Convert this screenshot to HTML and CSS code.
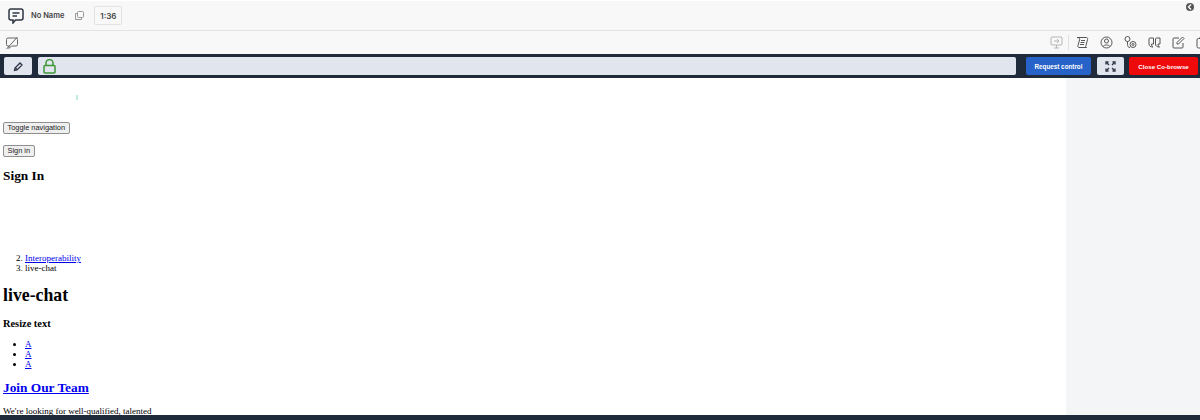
FILE: index.html
```html
<!DOCTYPE html>
<html lang="en">
<head>
    <meta charset="UTF-8">
    <meta name="viewport" content="width=device-width, initial-scale=1.0">
    <title>Live chat</title>
    <link rel="stylesheet" href="styles.css">
</head>
<body>

<div class="app">
    <!-- Chat header -->
    <div class="chat-header">
        <svg class="chat-icon" width="16" height="16" viewBox="0 0 16 16" fill="none" stroke="#2f3743" stroke-width="1.5">
            <path d="M3 1h10a2 2 0 0 1 2 2v7a2 2 0 0 1-2 2H7.500l-2.500 3v-3H3a2 2 0 0 1-2-2V3a2 2 0 0 1 2-2z"/>
            <path d="M4.500 5h7M4.500 8h4.500"/>
        </svg>
        <span class="chat-name">No Name</span>
        <svg class="copy-icon" width="9" height="9" viewBox="0 0 9 9" fill="none" stroke="#999" stroke-width="1">
            <rect x="2.500" y="0.500" width="6" height="6" rx="1"/>
            <path d="M2.500 2.500h-2v6h6v-2"/>
        </svg>
        <span class="timer">1:36</span>
        <span class="back-btn">
            <svg width="8" height="8" viewBox="0 0 8 8" fill="none" stroke="#fff" stroke-width="1.400"><path d="M5 1.500L2.500 4 5 6.500"/></svg>
        </span>
    </div>

    <!-- Tool icons -->
    <div class="toolbar">
        <svg width="14" height="14" viewBox="0 0 14 14" fill="none" stroke="#666" stroke-width="1">
            <path d="M3 2h8a1.500 1.500 0 0 1 1.500 1.500v5A1.500 1.500 0 0 1 11 10H6.500L4 12.500V10H3a1.500 1.500 0 0 1-1.500-1.500v-5A1.500 1.500 0 0 1 3 2z"/>
            <path d="M1.500 13L12.500 1"/>
        </svg>
        <div class="tool-icons">
            <svg class="tool-first" width="13" height="13" viewBox="0 0 13 13" fill="none" stroke="#b5b5b5" stroke-width="1">
                <rect x="1" y="1" width="11" height="8" rx="1"/>
                <path d="M6.500 9v3M4 12h5M4 5h5M7 3l2 2-2 2"/>
            </svg>
            <span class="tool-sep"></span>
            <svg width="13" height="13" viewBox="0 0 13 13" fill="none" stroke="#555" stroke-width="1">
                <path d="M1 1.500h9.500c1 0 1.500 1 1 2L10 9.500c-.5 1-.5 2 .5 2H3c-1 0-1.500-1-1-2L3.500 4C4 3 3.500 1.500 1 1.500z"/>
                <path d="M5 4.500h4M4.500 6.500h4M4 8.500h4"/>
            </svg>
            <svg width="13" height="13" viewBox="0 0 13 13" fill="none" stroke="#555" stroke-width="1">
                <circle cx="6.500" cy="6.500" r="5.500"/>
                <circle cx="6.500" cy="5" r="2"/>
                <path d="M3 10.500c1-2 6-2 7 0"/>
            </svg>
            <svg width="13" height="13" viewBox="0 0 13 13" fill="none" stroke="#555" stroke-width="1">
                <circle cx="3.500" cy="3" r="2.500"/>
                <circle cx="9" cy="8.500" r="3"/>
                <circle cx="9" cy="8.500" r="1"/>
                <path d="M3.500 5.500v3c0 2 1 3 2.500 3"/>
            </svg>
            <svg width="13" height="13" viewBox="0 0 13 13" fill="none" stroke="#555" stroke-width="1">
                <path d="M1 8V3a1 1 0 0 1 1-1h3.500v6H3.500C3.500 9.500 4 10.500 5 11 2.500 11 1 10 1 8z"/>
                <path d="M7.500 8V3a1 1 0 0 1 1-1H12v6h-2c0 1.500.5 2.500 1.500 3-2.500 0-4-1-4-3z"/>
            </svg>
            <svg width="13" height="13" viewBox="0 0 13 13" fill="none" stroke="#555" stroke-width="1">
                <path d="M11 7v4a1 1 0 0 1-1 1H2a1 1 0 0 1-1-1V3a1 1 0 0 1 1-1h5M5 6.500L10.500 1 12 2.500 6.500 8H5z"/>
            </svg>
            <svg width="13" height="13" viewBox="0 0 13 13" fill="none" stroke="#555" stroke-width="1">
                <rect x="1" y="2.500" width="11" height="9.500" rx="1.500"/>
                <path d="M4 2.500V1h5v1.500"/>
            </svg>
        </div>
    </div>

    <!-- Co-browse bar -->
    <div class="cobrowse-bar">
        <button class="bar-btn pen-btn">
            <svg width="11" height="11" viewBox="0 0 11 11" fill="none" stroke="#2b3442" stroke-width="1.300">
                <path d="M1.500 9.500l.5-2.500 5-5 2 2-5 5z"/>
                <path d="M2.500 7l1.500 1.500" />
            </svg>
        </button>
        <div class="url-box">
            <svg width="13" height="15" viewBox="0 0 13 15" fill="none" stroke="#3c9634" stroke-width="1.500">
                <rect x="1" y="6.500" width="11" height="7.500" rx="1"/>
                <path d="M3 6.500V4a3.500 3.500 0 0 1 7 0v2.500"/>
            </svg>
        </div>
        <button class="request-btn">Request control</button>
        <button class="bar-btn expand-btn">
            <svg width="11" height="11" viewBox="0 0 11 11" fill="none" stroke="#2b3442" stroke-width="1.300">
                <path d="M1 3.500V1h2.500M7.500 1H10v2.500M10 7.500V10H7.500M3.500 10H1V7.500M2 2l2 2M9 2L7 4M9 9L7 7M2 9l2-2"/>
            </svg>
        </button>
        <button class="close-btn">Close Co-browse</button>
    </div>

    <!-- Shared page -->
    <div class="shared">
        <div class="shared-page">
            <span class="logo-mark"></span>
            <button class="nav-toggle">Toggle navigation</button>
            <button class="sign-btn">Sign in</button>
            <h2 class="sign-title">Sign In</h2>
            <ol class="crumbs" start="2">
                <li><a href="#">Interoperability</a></li>
                <li>live-chat</li>
            </ol>
            <h1>live-chat</h1>
            <h3>Resize text</h3>
            <ul>
                <li><a href="#">A</a></li>
                <li><a href="#">A</a></li>
                <li><a href="#">A</a></li>
            </ul>
            <h2 class="team"><a href="#">Join Our Team</a></h2>
            <p>We're looking for well-qualified, talented</p>
        </div>
        <div class="shared-side"></div>
    </div>

    <div class="bottom-bar"></div>
</div>

</body>
</html>
```

FILE: styles.css
```css
* {
    box-sizing: border-box;
}
body {
    margin: 0;
    font-family: "Liberation Sans", Arial, sans-serif;
    background-color: #fff;
}
.app {
    width: 1200px;
    height: 420px;
    display: flex;
    flex-direction: column;
    overflow: hidden;
}
.chat-header {
    height: 31px;
    display: flex;
    align-items: center;
    padding: 0 8px;
    background-color: #f8f8f8;
    border-top: 1px solid #fff;
    border-bottom: 1px solid #e4e4e4;
    position: relative;
}
.chat-name {
    margin-left: 7px;
    font-family: Inter, sans-serif;
    font-size: 7.500px;
    font-weight: 600;
    color: #444;
}
.copy-icon {
    margin-left: 11px;
}
.timer {
    margin-left: 10px;
    width: 28px;
    height: 19px;
    display: flex;
    align-items: center;
    justify-content: center;
    font-family: Inter, sans-serif;
    font-size: 8px;
    font-weight: 600;
    color: #444;
    border: 1px solid #e2e2e2;
    border-radius: 2px;
}
.back-btn {
    position: absolute;
    top: 2px;
    right: 6px;
    width: 8px;
    height: 8px;
    display: flex;
    align-items: center;
    justify-content: center;
    border-radius: 50%;
    background-color: #555;
}
.toolbar {
    height: 23px;
    display: flex;
    align-items: center;
    justify-content: space-between;
    padding: 0 0 0 5px;
    background-color: #f8f8f8;
}
.tool-icons {
    display: flex;
    align-items: center;
    gap: 11px;
    margin-right: -9px;
}
.tool-first {
    margin-right: -6px;
}
.tool-sep {
    width: 1px;
    height: 15px;
    background-color: #e0e0e0;
    margin-right: -4px;
}
.cobrowse-bar {
    height: 24px;
    display: flex;
    align-items: center;
    padding: 0 2px 0 4px;
    background-color: #1f2a3a;
}
.bar-btn {
    height: 18px;
    padding: 0;
    display: flex;
    align-items: center;
    justify-content: center;
    background-color: #e1e5ee;
    border: none;
    border-radius: 2px;
}
.pen-btn {
    width: 28px;
}
.url-box {
    flex: 1;
    height: 18px;
    margin-left: 6px;
    padding-left: 5px;
    display: flex;
    align-items: center;
    background-color: #e1e5ee;
    border-radius: 2px;
}
.request-btn {
    width: 65px;
    height: 18px;
    margin-left: 10px;
    padding: 0;
    font-family: inherit;
    font-size: 6.300px;
    font-weight: 700;
    color: #fff;
    background-color: #2762c8;
    border: none;
    border-radius: 2px;
}
.expand-btn {
    width: 27px;
    margin-left: 6px;
}
.close-btn {
    width: 69px;
    height: 18px;
    margin-left: 5px;
    padding: 0;
    font-family: inherit;
    font-size: 6.200px;
    font-weight: 700;
    color: #fff;
    background-color: #ee0a0a;
    border: none;
    border-radius: 2px;
}
.shared {
    flex: 1;
    min-height: 0;
    display: flex;
    overflow: hidden;
}
.shared-page {
    flex: 1;
    padding: 17px 3px 0;
    font-family: "Liberation Serif", "Times New Roman", serif;
    font-size: 9px;
    line-height: 10px;
    color: #000;
    overflow: hidden;
}
.shared-side {
    width: 134px;
    background-color: #f4f5f7;
}
.shared-page a {
    color: #0000ee;
}
.logo-mark {
    display: block;
    width: 2px;
    height: 5px;
    margin-left: 73px;
    background-color: #c4ebdc;
}
.nav-toggle,
.sign-btn {
    display: block;
    height: 12px;
    padding: 0 3.500px;
    font-family: "Liberation Sans", Arial, sans-serif;
    font-size: 7.400px;
    line-height: 10px;
    color: #222;
    background-color: #efefef;
    border: 1px solid #8f8f8f;
    border-radius: 2px;
}
.nav-toggle {
    margin-top: 22px;
}
.sign-btn {
    margin-top: 11px;
}
h1,
h2,
h3,
p,
ol,
ul {
    margin: 0;
}
.sign-title {
    margin-top: 11px;
    font-size: 13.350px;
    line-height: 15px;
}
ol,
ul {
    padding-left: 22px;
}
.crumbs {
    margin-top: 70px;
}
h1 {
    margin-top: 12px;
    font-size: 17.800px;
    line-height: 20px;
}
h3 {
    margin-top: 13px;
    font-size: 10.400px;
    line-height: 12px;
}
ul {
    margin-top: 9px;
}
.team {
    margin-top: 11px;
    font-size: 13.350px;
    line-height: 15px;
}
p {
    margin-top: 11px;
}
.bottom-bar {
    height: 5px;
    background-color: #1f2a3a;
}
```
